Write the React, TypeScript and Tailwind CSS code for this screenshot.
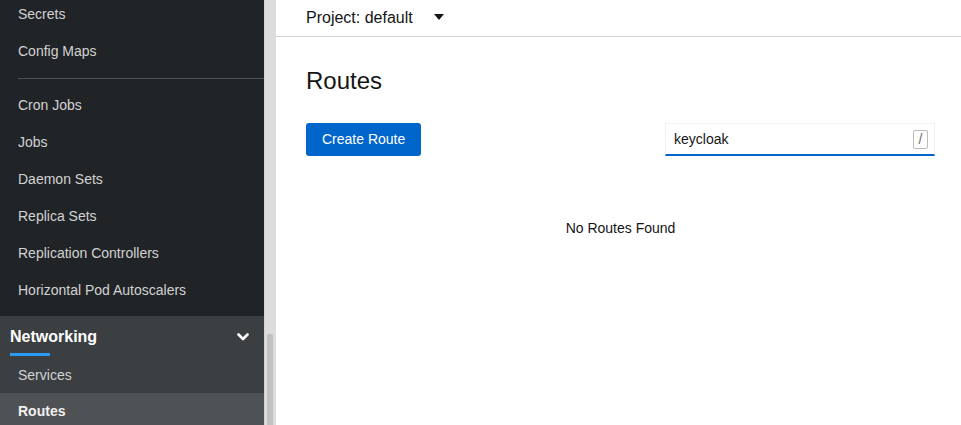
import React from "react";

const font = { fontFamily: '"Liberation Sans", Arial, sans-serif' };

function NavItem({ label }: { label: string }) {
  return (
    <div className="h-[37px] flex items-center pl-[18px] text-[14px] text-[#d2d2d2]">{label}</div>
  );
}

export default function App() {
  return (
    <div className="flex h-screen w-full overflow-hidden bg-white" style={font}>
      {/* Sidebar */}
      <div className="w-[264px] shrink-0 bg-[#212427] flex flex-col overflow-hidden">
        <div className="mt-[-4px]">
          <NavItem label="Secrets" />
          <NavItem label="Config Maps" />
          <div className="ml-[18px] mt-[8px] mb-[8px] h-px bg-[#4f5255]" />
          <NavItem label="Cron Jobs" />
          <NavItem label="Jobs" />
          <NavItem label="Daemon Sets" />
          <NavItem label="Replica Sets" />
          <NavItem label="Replication Controllers" />
          <NavItem label="Horizontal Pod Autoscalers" />
        </div>
        <div className="mt-[7px] flex-1 bg-[#3c3f42] flex flex-col">
          <div className="relative h-[41px] flex items-center justify-between pl-[10px] pr-[14px]">
            <span className="text-[16px] font-bold text-white">Networking</span>
            <svg width="12" height="8" viewBox="0 0 12 8" className="mr-[1px]">
              <path d="M1.5 1.5 L6 6 L10.5 1.5" fill="none" stroke="#ffffff" strokeWidth="2.6" strokeLinecap="round" strokeLinejoin="round" />
            </svg>
            <div className="absolute left-[10px] bottom-[1px] w-[40px] h-[3px] bg-[#2b9af3]" />
          </div>
          <div className="h-[36px] flex items-center pl-[18px] text-[14px] text-[#d2d2d2]">Services</div>
          <div className="h-[37px] flex items-center pl-[18px] text-[14px] font-bold text-[#f0f0f0] bg-[#4f5255]">Routes</div>
        </div>
      </div>
      {/* Scrollbar */}
      <div className="w-[12px] shrink-0 bg-[#dcdcdc] border-l border-[#d4d4d4] flex flex-col justify-end pl-[2px] pr-[3px]">
        <div className="h-[91px] bg-[#c1c1c1] rounded-t-[2px]" />
      </div>
      {/* Main */}
      <div className="flex-1 flex flex-col min-w-0">
        <div className="h-[36px] border-b border-[#d2d2d2] flex items-center pl-[30px] box-content">
          <span className="text-[16px] text-[#151515]">Project: default</span>
          <svg width="10" height="6" viewBox="0 0 10 6" className="ml-[21px] mt-[-2px]">
            <path d="M0 0 L10 0 L5 6 Z" fill="#151515" />
          </svg>
        </div>
        <div className="pl-[30px] pr-[26px]">
          <h1 className="text-[24px] text-[#151515] mt-[29px] leading-[30px]">Routes</h1>
          <div className="mt-[27px] flex items-center justify-between">
            <button className="h-[33px] px-[16px] bg-[#0066cc] rounded-[3px] text-white text-[14px]">Create Route</button>
            <div className="w-[270px] h-[33px] border border-[#f0f0f0] border-b-[#0066cc] border-b-2 flex items-center justify-between pl-[8px] pr-[6px]">
              <span className="text-[14px] text-[#151515]">keycloak</span>
              <span className="w-[15px] h-[19px] border border-[#bbbbbb] rounded-[2px] flex items-center justify-center text-[14px] text-[#6a6e73]">/</span>
            </div>
          </div>
          <div className="mt-[62px] text-center text-[14px] text-[#151515]">No Routes Found</div>
        </div>
      </div>
    </div>
  );
}
